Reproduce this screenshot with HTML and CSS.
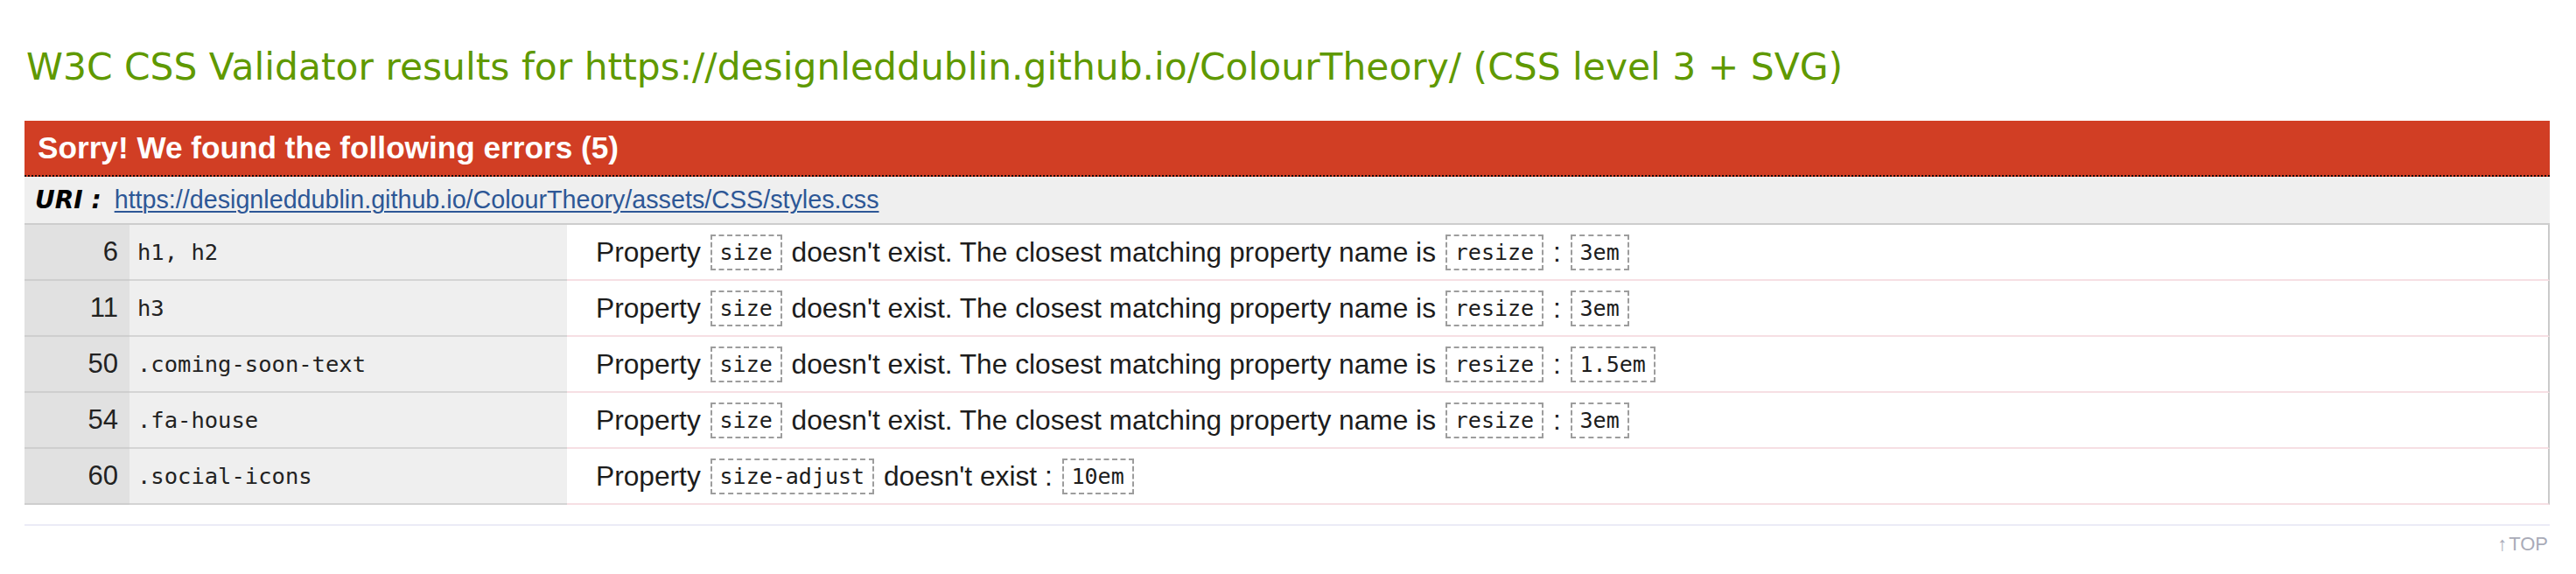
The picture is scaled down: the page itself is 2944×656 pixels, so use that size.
FILE: index.html
```html
<!DOCTYPE html>
<html lang="en">
<head>
<meta charset="utf-8">
<title>W3C CSS Validator results</title>
<link rel="stylesheet" href="styles.css">
</head>
<body>
<div class="page">
  <h1 class="title">W3C CSS Validator results for https://designleddublin.github.io/ColourTheory/ (CSS level 3 + SVG)</h1>
  <div class="errors-block">
    <h2 class="errors-head">Sorry! We found the following errors (5)</h2>
    <div class="uri-band"><span class="uri-label">URI :</span> <a class="uri-link" href="#">https://designleddublin.github.io/ColourTheory/assets/CSS/styles.css</a></div>
    <div class="err-table">
      <div class="c-line">6</div>
      <div class="c-sel">h1, h2</div>
      <div class="c-msg">Property <code class="cv">size</code> doesn't exist. The closest matching property name is <code class="cv">resize</code> : <code class="cv">3em</code></div>

      <div class="c-line">11</div>
      <div class="c-sel">h3</div>
      <div class="c-msg">Property <code class="cv">size</code> doesn't exist. The closest matching property name is <code class="cv">resize</code> : <code class="cv">3em</code></div>

      <div class="c-line">50</div>
      <div class="c-sel">.coming-soon-text</div>
      <div class="c-msg">Property <code class="cv">size</code> doesn't exist. The closest matching property name is <code class="cv">resize</code> : <code class="cv">1.5em</code></div>

      <div class="c-line">54</div>
      <div class="c-sel">.fa-house</div>
      <div class="c-msg">Property <code class="cv">size</code> doesn't exist. The closest matching property name is <code class="cv">resize</code> : <code class="cv">3em</code></div>

      <div class="c-line">60</div>
      <div class="c-sel">.social-icons</div>
      <div class="c-msg">Property <code class="cv">size-adjust</code> doesn't exist : <code class="cv">10em</code></div>
    </div>
  </div>
  <div class="sep"></div>
  <div class="top-row"><a class="top-link" href="#">&#8593;&#8202;TOP</a></div>
</div>
</body>
</html>
```

FILE: styles.css
```css
html, body {
  margin: 0;
  padding: 0;
  background: #ffffff;
}

.page {
  padding: 0 30px 0 28px;
}

.title {
  margin: 0 0 35px 2px;
  padding-top: 51px;
  font-family: "DejaVu Sans", Verdana, sans-serif;
  font-weight: normal;
  font-size: 42.4px;
  line-height: 52px;
  color: #5f9900;
  white-space: nowrap;
}

.errors-head {
  margin: 0;
  height: 62px;
  line-height: 62px;
  padding-left: 15px;
  background: #d13e24;
  color: #ffffff;
  font-family: "Liberation Sans", Arial, sans-serif;
  font-weight: bold;
  font-size: 35.2px;
  border-bottom: 2px dotted #1a0a08;
}

.uri-band {
  height: 53px;
  display: flex;
  align-items: center;
  gap: 15px;
  padding-left: 12px;
  background: #efefef;
  border-bottom: 2px solid #cdcdcd;
  white-space: nowrap;
}

.uri-label {
  font-family: "DejaVu Sans", Verdana, sans-serif;
  font-weight: bold;
  font-style: italic;
  font-size: 28px;
  color: #000000;
}

.uri-link {
  font-family: "Liberation Sans", Arial, sans-serif;
  font-size: 28.7px;
  color: #2d5796;
  text-decoration: underline;
  text-decoration-thickness: 2px;
  text-underline-offset: 3px;
}

.err-table {
  display: grid;
  grid-template-columns: 120px 500px 1fr;
}

.c-line,
.c-sel,
.c-msg {
  box-sizing: border-box;
  height: 64px;
  display: flex;
  align-items: center;
  white-space: nowrap;
}

.c-line {
  justify-content: flex-end;
  padding-right: 13px;
  background: #e1e1e1;
  border-bottom: 2px solid #cecece;
  font-family: "Liberation Sans", Arial, sans-serif;
  font-size: 31px;
  color: #222222;
}

.c-sel {
  padding-left: 9px;
  background: #efefef;
  border-bottom: 2px solid #d4d4d4;
  font-family: "DejaVu Sans Mono", Menlo, monospace;
  font-size: 25.5px;
  color: #222222;
}

.c-msg {
  padding-left: 33px;
  background: #ffffff;
  border-bottom: 2px solid #f6dfe3;
  border-right: 2px solid #cacaca;
  font-family: "Liberation Sans", Arial, sans-serif;
  font-size: 31.7px;
  color: #1c1c1c;
  white-space: pre;
}

.cv {
  display: inline-block;
  margin: 0 2px;
  padding: 5px 9px;
  border: 2px dashed #9d9d9d;
  font-family: "DejaVu Sans Mono", Menlo, monospace;
  font-size: 25px;
  line-height: 27px;
  color: #1c1c1c;
}

.sep {
  margin-top: 22px;
  height: 2px;
  background: #ebebf6;
}

.top-row {
  display: flex;
  justify-content: flex-end;
  padding-top: 8px;
  padding-right: 2px;
}

.top-link {
  font-family: "Liberation Sans", Arial, sans-serif;
  font-size: 22px;
  color: #a9abb8;
  text-decoration: none;
}
```
